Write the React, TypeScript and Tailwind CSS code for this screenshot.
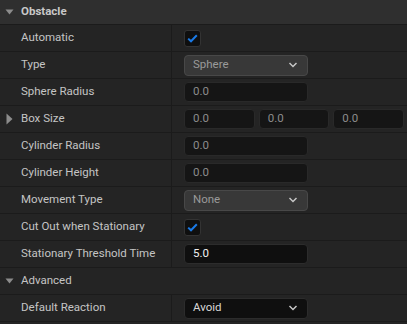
import React from 'react'

const font = { fontFamily: 'Roboto, "Liberation Sans", sans-serif' }

const Caret = ({ open }: { open: boolean }) => (
  <svg width="12" height="12" viewBox="0 0 12 12" className="shrink-0">
    {open ? <path d="M0.5 3.5 L8.5 3.5 L4.5 8.5 Z" fill="#8c8c8c" /> : <path d="M1.5 0.5 L7.5 6 L1.5 11.5 Z" fill="#8c8c8c" />}
  </svg>
)

const Check = () => (
  <div className="w-[17px] h-[17px] rounded-[3px] bg-[#0f0f0f] border border-[#333] flex items-center justify-center">
    <svg width="11" height="9" viewBox="0 0 11 9">
      <path d="M1.2 4.6 L4 7.3 L9.8 1.3" stroke="#1a7ae6" strokeWidth="2" fill="none" />
    </svg>
  </div>
)

const Chevron = () => (
  <svg width="10" height="6" viewBox="0 0 10 6">
    <path d="M1.5 1 L5 4.6 L8.5 1" stroke="#c8c8c8" strokeWidth="1.4" fill="none" />
  </svg>
)

const Dropdown = ({ value, dark }: { value: string; dark?: boolean }) => (
  <div
    className={
      dark
        ? 'w-[124px] h-[21px] rounded-[4px] bg-[#0f0f0f] border border-[#2c2c2c] flex items-center justify-between pl-[8px] pr-[9px] text-[#d8d8d8]'
        : 'w-[124px] h-[21px] rounded-[4px] bg-[#383838] border border-[#484848] flex items-center justify-between pl-[8px] pr-[9px] text-[#9a9a9a]'
    }
  >
    <span>{value}</span>
    <Chevron />
  </div>
)

const Input = ({ value, bright, className }: { value: string; bright?: boolean; className?: string }) => (
  <div
    className={
      (bright
        ? 'bg-[#0f0f0f] border-[#2c2c2c] text-[#f0f0f0] '
        : 'bg-[#151515] border-[#292929] text-[#8c8c8c] ') +
      'h-[20px] rounded-[4px] border flex items-center pl-[8px] ' +
      (className ?? 'w-[124px]')
    }
  >
    {value}
  </div>
)

const Row = ({ label, children, caret }: { label: string; children: React.ReactNode; caret?: boolean }) => (
  <div className="flex h-[27px] border-b border-[#1b1b1b] bg-[#242424]">
    <div className="w-[172px] shrink-0 border-r border-[#1b1b1b] flex items-center pl-[5px] text-[#c4c4c4]">
      <div className="w-[16px]">{caret && <Caret open={false} />}</div>
      {label}
    </div>
    <div className="flex-1 flex items-center pl-[12px] pr-[3px]">{children}</div>
  </div>
)

export default function App() {
  return (
    <div className="w-[407px] h-[324px] bg-[#242424] text-[11.5px] overflow-hidden" style={font}>
      <div className="h-[25px] border-b border-[#1b1b1b] bg-[#2f2f2f] flex items-center pl-[5px] font-bold text-[#c8c8c8]">
        <div className="w-[16px]"><Caret open /></div>
        Obstacle
      </div>
      <Row label="Automatic"><Check /></Row>
      <Row label="Type"><Dropdown value="Sphere" /></Row>
      <Row label="Sphere Radius"><Input value="0.0" /></Row>
      <Row label="Box Size" caret>
        <div className="flex gap-[4px] w-full">
          <Input value="0.0" className="flex-1" />
          <Input value="0.0" className="flex-1" />
          <Input value="0.0" className="flex-1" />
        </div>
      </Row>
      <Row label="Cylinder Radius"><Input value="0.0" /></Row>
      <Row label="Cylinder Height"><Input value="0.0" /></Row>
      <Row label="Movement Type"><Dropdown value="None" /></Row>
      <Row label="Cut Out when Stationary"><Check /></Row>
      <Row label="Stationary Threshold Time"><Input value="5.0" bright /></Row>
      <div className="h-[27px] border-b border-[#1b1b1b] bg-[#242424] flex items-center pl-[5px] text-[#c4c4c4]">
        <div className="w-[16px]"><Caret open /></div>
        Advanced
      </div>
      <Row label="Default Reaction"><Dropdown value="Avoid" dark /></Row>
    </div>
  )
}
